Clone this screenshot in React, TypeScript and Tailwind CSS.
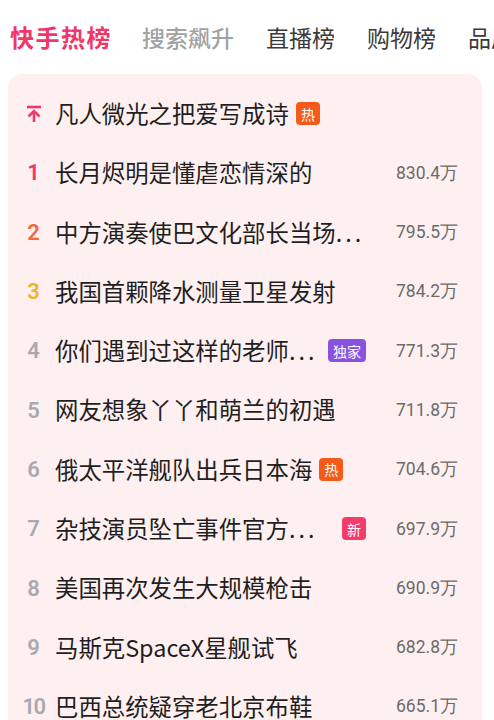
import { Fragment } from "react"

type Tag = "hot" | "only" | "new"

interface Item {
  rank: string
  title: string
  dots?: boolean
  tag?: Tag
  heat?: string
}

const items: Item[] = [
  { rank: "top", title: "凡人微光之把爱写成诗", tag: "hot" },
  { rank: "1", title: "长月烬明是懂虐恋情深的", heat: "830.4万" },
  { rank: "2", title: "中方演奏使巴文化部长当场", dots: true, heat: "795.5万" },
  { rank: "3", title: "我国首颗降水测量卫星发射", heat: "784.2万" },
  { rank: "4", title: "你们遇到过这样的老师", dots: true, tag: "only", heat: "771.3万" },
  { rank: "5", title: "网友想象丫丫和萌兰的初遇", heat: "711.8万" },
  { rank: "6", title: "俄太平洋舰队出兵日本海", tag: "hot", heat: "704.6万" },
  { rank: "7", title: "杂技演员坠亡事件官方", dots: true, tag: "new", heat: "697.9万" },
  { rank: "8", title: "美国再次发生大规模枪击", heat: "690.9万" },
  { rank: "9", title: "马斯克SpaceX星舰试飞", heat: "682.8万" },
  { rank: "10", title: "巴西总统疑穿老北京布鞋", heat: "665.1万" },
]

const rankColor = (rank: string) => {
  if (rank === "1") return "text-[#f2386a]"
  if (rank === "2") return "text-[#f26b36]"
  if (rank === "3") return "text-[#f4b223]"
  return "text-[#a9a9b1]"
}

const Badge = ({ tag, push }: { tag: Tag, push: boolean }) => {
  const base = "flex items-center justify-center h-[23px] rounded-[4px] text-white text-[14px] leading-none shrink-0"
  const place = push ? "ml-auto" : "ml-[7px]"
  if (tag === "hot") return <span className={`${base} ${place} w-[24px] bg-[#f45a1a]`}>热</span>
  if (tag === "only") return <span className={`${base} ${place} w-[38px] bg-[#8a52e2]`}>独家</span>
  return <span className={`${base} ${place} w-[24px] bg-[#f23d6c]`}>新</span>
}

const PinIcon = () => (
  <svg width="16" height="17" viewBox="0 0 16 17" fill="none" stroke="#f2386a" strokeWidth="2.6" strokeLinecap="butt">
    <path d="M1 2h14" />
    <path d="M8 6v11" />
    <path d="M2.5 11.5L8 6l5.5 5.5" />
  </svg>
)

export default function App() {
  return (
    <div className="w-[494px] h-[720px] overflow-hidden bg-white font-['Noto_Sans_CJK_SC',sans-serif]">
      <div className="h-[74px] flex items-center pl-[10px] gap-[32px] whitespace-nowrap">
        <span className="text-[24px] font-bold text-[#f0376a] tracking-[1.5px] -mr-[2px]">快手热榜</span>
        <span className="text-[23px] font-medium text-[#a2a2a2]">搜索飙升</span>
        <span className="text-[23px] text-[#3a3a3a]">直播榜</span>
        <span className="text-[23px] text-[#3a3a3a]">购物榜</span>
        <span className="text-[23px] text-[#3a3a3a]">品质榜</span>
      </div>

      <div className="ml-[8px] w-[474px] rounded-[14px] bg-[#fef0f0] pt-[10px] pb-4">
        {items.map((item) => (
          <div key={item.rank} className="h-[59.3px] flex items-center pl-[14px] pr-[24px]">
            <div className="w-[23px] flex justify-center shrink-0">
              {item.rank === "top" ? (
                <PinIcon />
              ) : (
                <span className={`font-['Roboto',sans-serif] font-semibold text-[22px] ${item.rank === "10" ? "tracking-[-1.5px]" : ""} ${rankColor(item.rank)}`}>
                  {item.rank}
                </span>
              )}
            </div>
            <div className="flex-1 min-w-0 flex items-center ml-[10px]">
              <span className="text-[23.4px] leading-none text-[#1f1f1f] whitespace-nowrap">
                {item.title}
                {item.dots && (
                  <Fragment>
                    <span className="tracking-[3px]">...</span>
                  </Fragment>
                )}
              </span>
              {item.tag && <Badge tag={item.tag} push={!!item.dots} />}
            </div>
            {item.heat && (
              <span className="w-[92px] shrink-0 text-right font-['Roboto',sans-serif] text-[17.5px] text-[#6b6b6b]">
                {item.heat}
              </span>
            )}
          </div>
        ))}
      </div>
    </div>
  )
}
